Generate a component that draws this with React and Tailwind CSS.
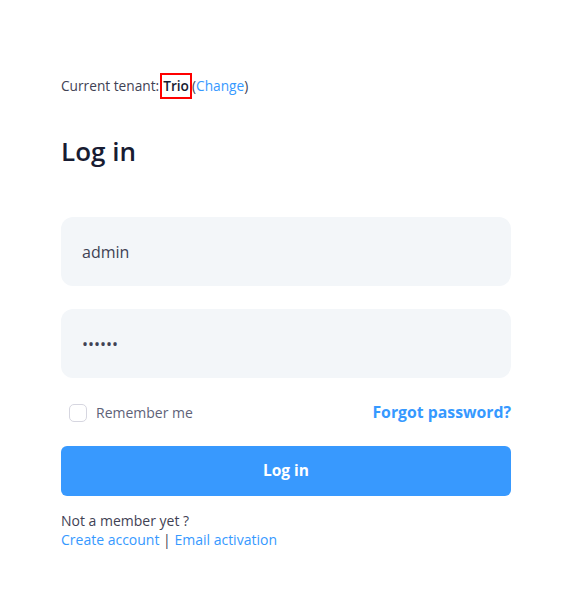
import { useState } from 'react'

export default function App() {
  const [username, setUsername] = useState('admin')
  const [password, setPassword] = useState('123qwe')
  const [remember, setRemember] = useState(false)

  return (
    <div className="min-h-screen bg-white font-['Open_Sans',sans-serif] text-[#3f4254]">
      <div className="ml-[61px] w-[450px] pt-[73px]">
        {/* Tenant */}
        <div className="flex items-center text-[13.7px] leading-[22px] text-[#3f4254]">
          <span>Current tenant:</span>
          <span className="ml-[1px] border-2 border-[#ff0000] px-[1px] font-semibold text-[#181c32]">Trio</span>
          <span>
            (<a href="#" className="text-[#3699ff]">Change</a>)
          </span>
        </div>

        {/* Title */}
        <h3 className="mt-[35px] text-[26px] font-semibold leading-[34px] text-[#181c32]">Log in</h3>

        {/* Form */}
        <form className="mt-[49px]" onSubmit={(e) => e.preventDefault()}>
          <input
            value={username}
            onChange={(e) => setUsername(e.target.value)}
            className="block h-[69px] w-full rounded-[12px] bg-[#f3f6f9] px-[21px] text-[16px] text-[#3f4254] outline-none"
          />
          <input
            type="password"
            value={password}
            onChange={(e) => setPassword(e.target.value)}
            className="mt-[23px] block h-[69px] w-full rounded-[12px] bg-[#f3f6f9] px-[21px] text-[16px] text-[#3f4254] outline-none"
          />

          <div className="mt-[23px] flex items-center justify-between">
            <label className="flex items-center gap-[9px] text-[14px] text-[#5e6278]">
              <span
                onClick={() => setRemember(!remember)}
                className={`ml-[8px] h-[18px] w-[18px] rounded-[5px] border ${
                  remember ? 'border-[#3699ff] bg-[#3699ff]' : 'border-[#d6d6e0] bg-white'
                }`}
              />
              Remember me
            </label>
            <a href="#" className="text-[15.8px] font-bold text-[#3699ff]">
              Forgot password?
            </a>
          </div>

          <button
            type="submit"
            className="mt-[21px] block h-[50px] w-full rounded-[6px] bg-[#3899fe] text-[15.5px] font-bold text-white"
          >
            Log in
          </button>
        </form>

        {/* Footer links */}
        <div className="mt-[15px] text-[14px] leading-[19px]">
          <p className="text-[#3f4254]">Not a member yet ?</p>
          <p>
            <a href="#" className="text-[#3699ff]">Create account</a>
            <span className="text-[#3f4254]"> | </span>
            <a href="#" className="text-[#3699ff]">Email activation</a>
          </p>
        </div>
      </div>
    </div>
  )
}
